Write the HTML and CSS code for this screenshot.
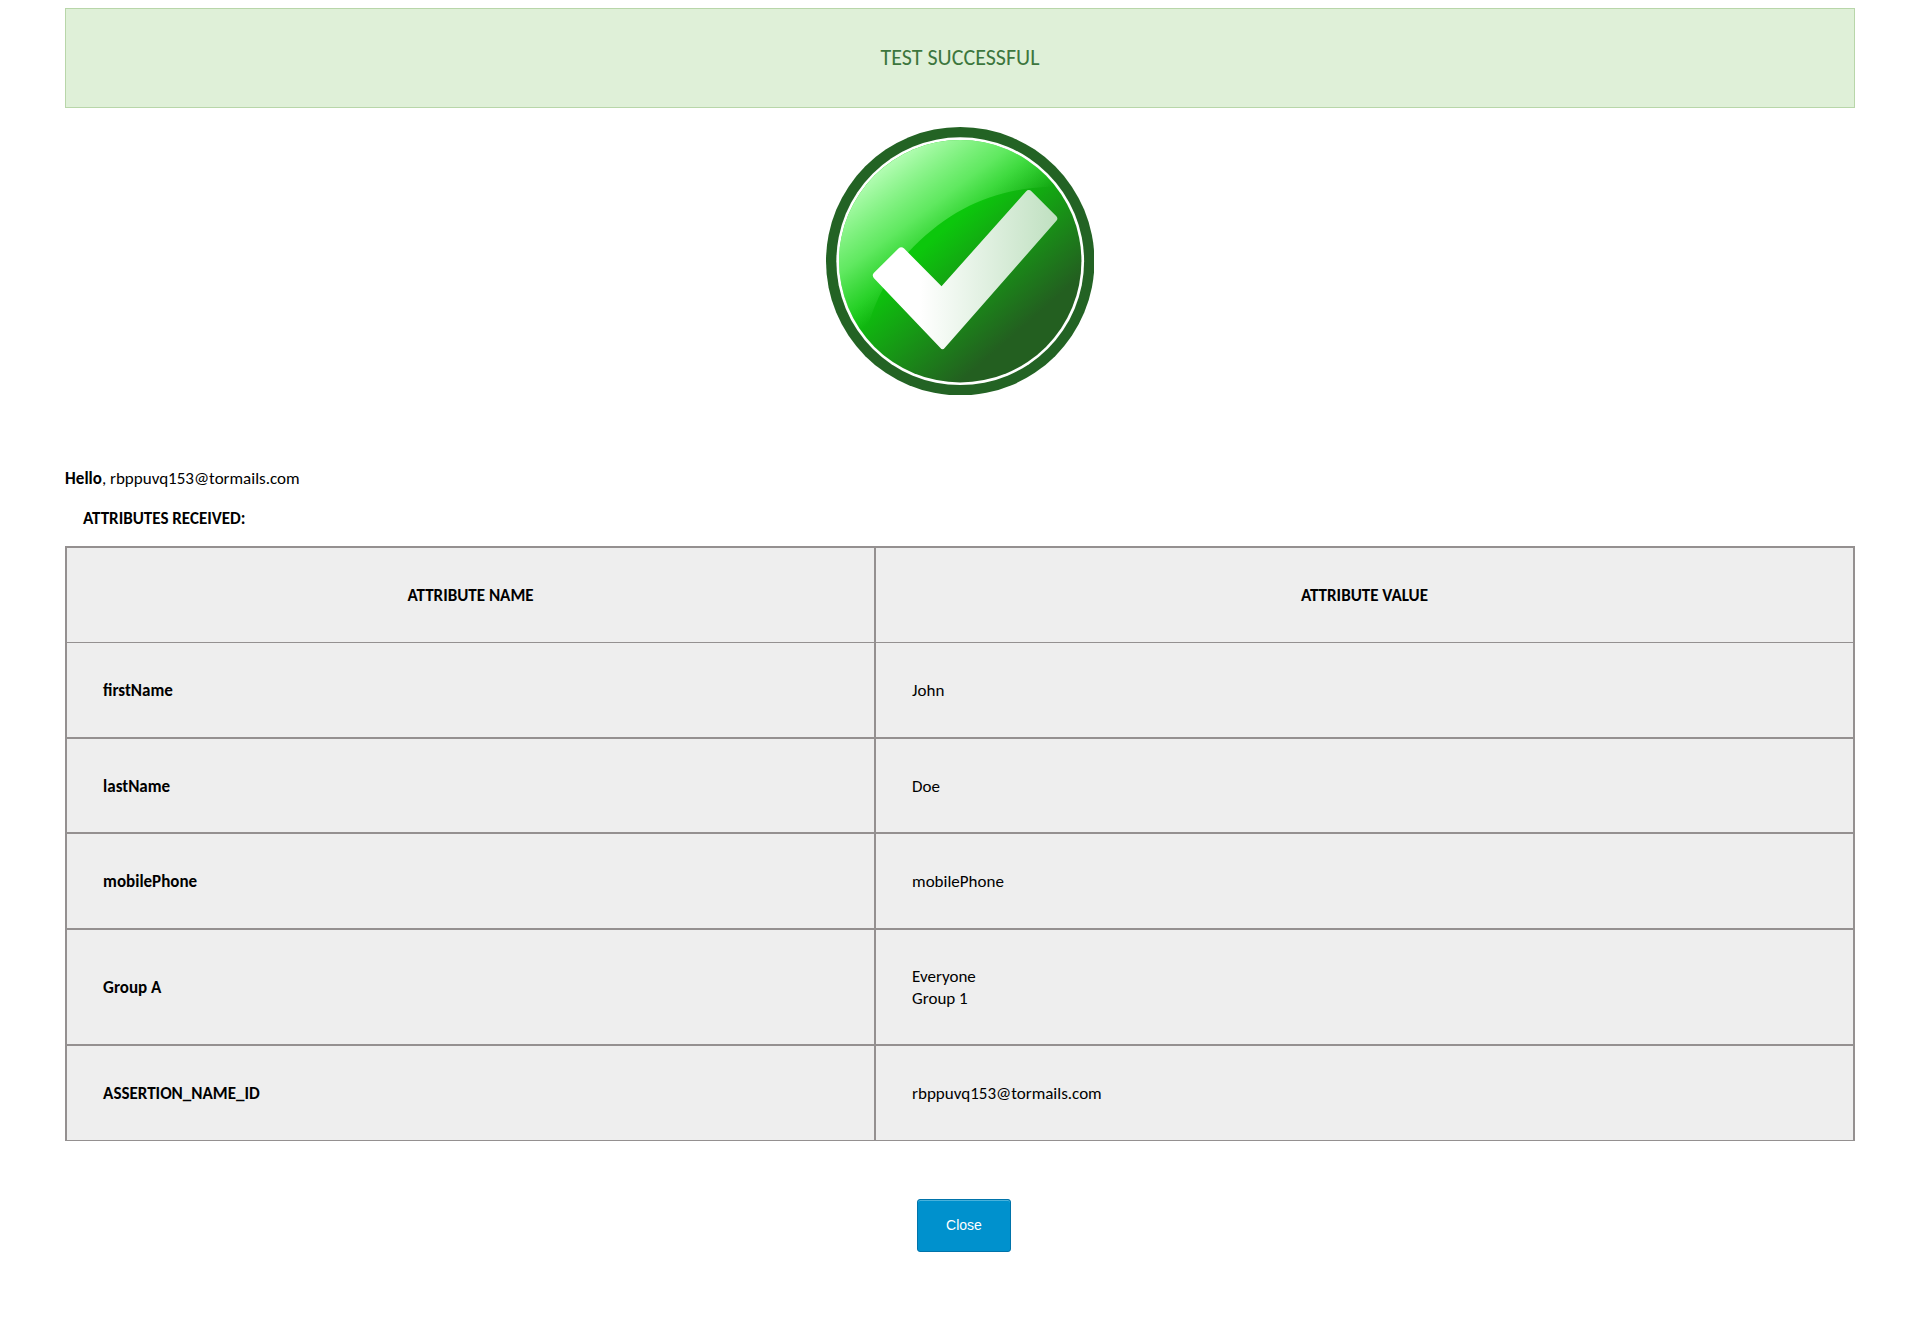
FILE: index.html
```html
<!DOCTYPE html>
<html lang="en">
<head>
<meta charset="utf-8">
<title>Test Successful</title>
<link rel="stylesheet" href="styles.css">
</head>
<body>
<main class="page">
  <div class="banner" role="status">TEST SUCCESSFUL</div>
  <svg class="tick" viewBox="48 51 804 804" role="img" aria-label="Success">
    <defs>
      <linearGradient id="base" gradientUnits="userSpaceOnUse" x1="382" y1="375" x2="630" y2="657">
        <stop offset="0" stop-color="#0cc70c"/>
        <stop offset="1" stop-color="#235f20"/>
      </linearGradient>
      <linearGradient id="gloss" gradientUnits="userSpaceOnUse" x1="240" y1="165" x2="445" y2="440">
        <stop offset="0" stop-color="#b8ffb8" stop-opacity="0.95"/>
        <stop offset="0.5" stop-color="#98ff98" stop-opacity="0.6"/>
        <stop offset="1" stop-color="#80f080" stop-opacity="0"/>
      </linearGradient>
      <linearGradient id="mark" gradientUnits="userSpaceOnUse" x1="330" y1="0" x2="741" y2="0">
        <stop offset="0" stop-color="#ffffff"/>
        <stop offset="1" stop-color="#bfe0c0"/>
      </linearGradient>
      <clipPath id="face"><circle cx="450" cy="453" r="363"/></clipPath>
    </defs>
    <circle cx="450" cy="453" r="402" fill="#236324"/>
    <circle cx="450" cy="453" r="371" fill="#ffffff"/>
    <circle cx="450" cy="453" r="363" fill="url(#base)"/>
    <path clip-path="url(#face)" fill="url(#gloss)" d="M820 235Q770 228 720 230C560 235 430 290 310 410C230 490 180 600 160 700L40 700V40H820Z"/>
    <path fill="url(#mark)" d="M265 415Q273 407 282 415L394 528L647 244Q655 236 664 244L738 318Q744 325 738 332L404 712Q397 721 390 712L191 503Q185 495 191 488Z"/>
  </svg>
  <p class="greeting"><strong>Hello</strong>, rbppuvq153@tormails.com</p>
  <h1 class="caption" id="caption">ATTRIBUTES RECEIVED:</h1>
  <table class="attributes" aria-labelledby="caption">
    <thead>
      <tr><th class="name" scope="col">ATTRIBUTE NAME</th><th scope="col">ATTRIBUTE VALUE</th></tr>
    </thead>
    <tbody>
      <tr><th scope="row">firstName</th><td>John</td></tr>
      <tr><th scope="row">lastName</th><td>Doe</td></tr>
      <tr><th scope="row">mobilePhone</th><td>mobilePhone</td></tr>
      <tr><th scope="row">Group A</th><td>Everyone<br>Group 1</td></tr>
      <tr><th scope="row">ASSERTION_NAME_ID</th><td>rbppuvq153@tormails.com</td></tr>
    </tbody>
  </table>
  <button class="close" type="button">Close</button>
</main>
</body>
</html>
```
FILE: styles.css
```css
* {
  box-sizing: border-box;
}

body {
  margin: 8px;
  background: #fff;
  color: #000;
  font: 17px/22px Calibri, Carlito, Lato, sans-serif;
}

.page {
  display: flex;
  flex-direction: column;
  padding: 0 3%;
}

.banner {
  padding: 36px;
  border: 1px solid #b8d6a9;
  background: #dff0d8;
  color: #3c763d;
  font-size: 22px;
  line-height: 26px;
  text-align: center;
}

.tick {
  width: 15%;
  margin: 19px auto 73px;
}

.greeting {
  margin: 0 0 18px;
}

.caption {
  margin: 0 0 16px 18px;
  font-size: 17px;
  font-weight: bold;
}

.attributes {
  width: 100%;
  border: 2px solid #949090;
  border-bottom: 0;
  border-spacing: 0;
  background: #eee;
}

.attributes th,
.attributes td {
  height: 96px;
  padding: 36px 36px 34px;
  border-bottom: 2px solid #949090;
  text-align: left;
  overflow-wrap: anywhere;
}

.attributes th:first-child {
  border-right: 2px solid #949090;
}

.attributes thead th {
  height: 95px;
  border-bottom-width: 1px;
  text-align: center;
}

.attributes tbody tr:nth-child(even) > * {
  height: 95px;
}

.attributes tbody tr:last-child > * {
  height: 95px;
  border-bottom-width: 1px;
}

.attributes .name {
  width: 45.3%;
}

.close {
  align-self: center;
  margin: 58px 0 0 8px;
  padding: 18px 28px;
  border: 1px solid #0073aa;
  border-radius: 3px;
  background: #0091cd;
  box-shadow: inset 0 1px 0 rgba(120, 200, 230, 0.6);
  color: #fff;
  font: 14px/15px "Liberation Sans", Arial, sans-serif;
  cursor: pointer;
}
```
